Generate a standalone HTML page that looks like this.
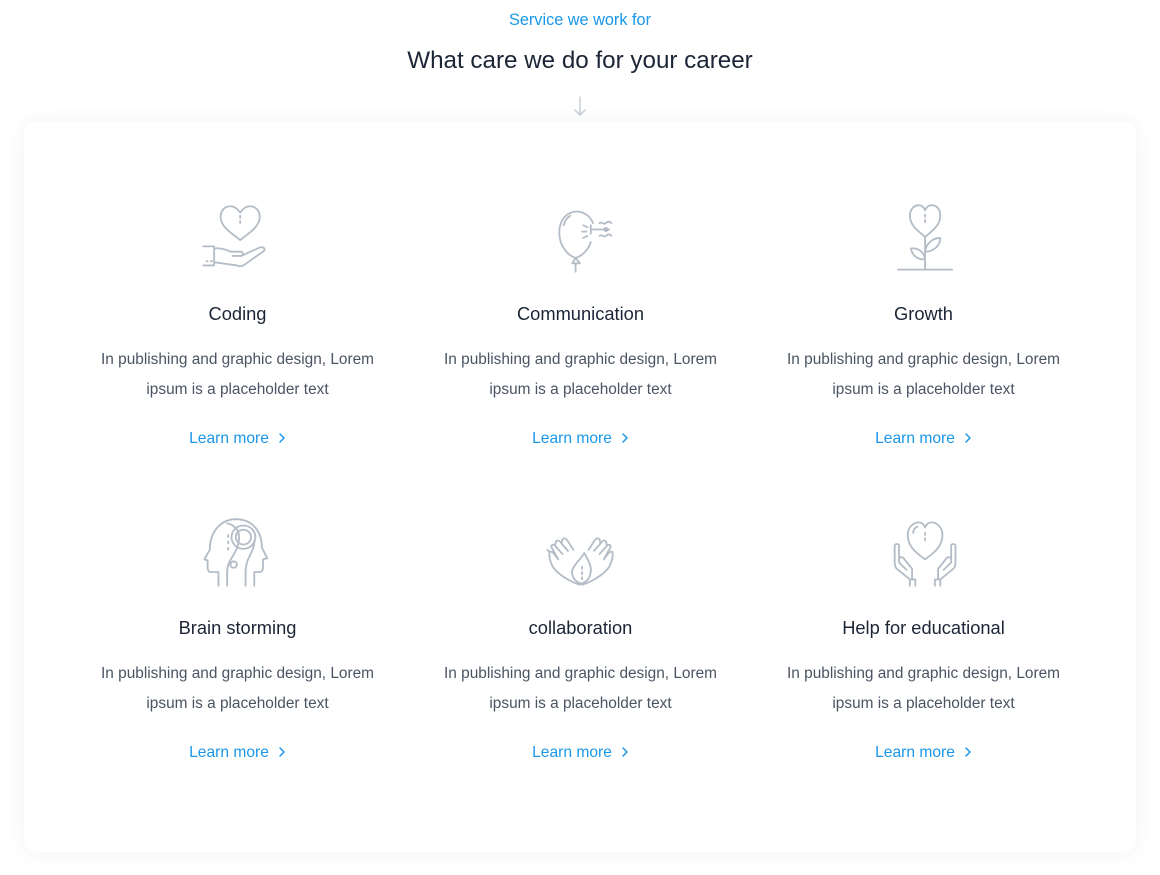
<!DOCTYPE html>
<html><head><meta charset="utf-8"><style>
*{margin:0;padding:0;box-sizing:border-box}
body{width:1160px;height:875px;background:#fff;font-family:"Liberation Sans",sans-serif;position:relative;overflow:hidden}
.sub{position:absolute;top:11px;left:0;width:1160px;text-align:center;color:#1a97e8;font-size:16.3px}
.h{position:absolute;top:47px;left:0;width:1160px;text-align:center;color:#1b2536;font-size:24.2px}
.arrow{position:absolute;left:573px;top:95px}
.card{position:absolute;left:24px;top:122px;width:1112px;height:730px;border-radius:12px;background:#fff;box-shadow:0 0 22px rgba(30,50,80,.06)}
.cell{position:absolute;width:343px;text-align:center}
.cell svg{display:block;margin:0 auto}
.t{font-size:18.3px;color:#1b2536;position:absolute;top:101px;width:100%}
.d{font-size:15.4px;color:#4a5462;line-height:30px;position:absolute;top:143px;width:100%}
.l{font-size:15.6px;color:#1a97e8;position:absolute;top:228px;width:100%}
.l svg{display:inline-block;margin-left:9px;vertical-align:-1px}
svg *{fill:none;stroke:#b4bdc7;stroke-width:1.7;stroke-linecap:round;stroke-linejoin:round}
</style></head><body>
<div class="sub">Service we work for</div>
<div class="h">What care we do for your career</div>
<svg class="arrow" width="14" height="22" viewBox="0 0 14 22"><path d="M7 2V20M2 15L7 20L12 15" style="stroke:#c8cfd6;stroke-width:1.5"/></svg>
<div class="card"></div>

<!-- row 1 -->
<div class="cell" style="left:66px;top:202px">
<svg width="76" height="74" viewBox="0 0 70 70" preserveAspectRatio="none"><path d="M37 36C30 30 19 24 19 14C19 8 23 4 28 4C32 4 35 7 37 10C39 7 42 4 46 4C51 4 55 8 55 14C55 24 44 30 37 36Z"/><path d="M37 13V15M37 18V20"/><path d="M3 42H13V60H3M13 44C19 43 24 45 28 47H38C40 47 40 51 38 51H30M30 51H38L55 43C59 42 61 45 58 47L40 60C38 61 36 61 34 60L13 57M6 56H7M10 56H11"/></svg>
<div class="t">Coding</div><div class="d">In publishing and graphic design, Lorem<br>ipsum is a placeholder text</div><div class="l">Learn more<svg width="8" height="12" viewBox="0 0 8 12"><path d="M2 2L6 6L2 10" style="stroke:#1a97e8;stroke-width:1.5"/></svg></div></div>

<div class="cell" style="left:409px;top:202px">
<svg width="76" height="74" viewBox="0 0 70 70" preserveAspectRatio="none"><path d="M30 53C22 50 15 41 15 29C15 17 22 9 31 9C38 9 44 14 46 20M30 53C36 51 42 45 44 38"/><path d="M19 22C20 18 22 15 25 13"/><path d="M30 53L27 58H34L30 53ZM30 58V66"/><path d="M37 22L41 24M36 28H40M37 34L41 32M44 26H61M52 20C54 18 56 22 58 20S61 18 63 20M52 32C54 30 56 34 58 32S61 30 63 32M44 22V30"/><circle cx="58" cy="26" r="1.5"/></svg>
<div class="t">Communication</div><div class="d">In publishing and graphic design, Lorem<br>ipsum is a placeholder text</div><div class="l">Learn more<svg width="8" height="12" viewBox="0 0 8 12"><path d="M2 2L6 6L2 10" style="stroke:#1a97e8;stroke-width:1.5"/></svg></div></div>

<div class="cell" style="left:752px;top:202px">
<svg width="76" height="74" viewBox="0 0 70 70" preserveAspectRatio="none"><path d="M36 33C29 27 22 22 22 13C22 7 26 3 30 3C33 3 35 5 36 8C37 5 39 3 42 3C47 3 50 7 50 13C50 22 43 27 36 33Z"/><path d="M36 12V14M36 17V19M36 33V64M11 64H61"/><path d="M36 54C30 55 24 51 23 44C29 43 35 47 36 54Z"/><path d="M36 47C37 39 43 34 50 34C50 41 44 47 36 47Z"/></svg>
<div class="t">Growth</div><div class="d">In publishing and graphic design, Lorem<br>ipsum is a placeholder text</div><div class="l">Learn more<svg width="8" height="12" viewBox="0 0 8 12"><path d="M2 2L6 6L2 10" style="stroke:#1a97e8;stroke-width:1.5"/></svg></div></div>

<!-- row 2 -->
<div class="cell" style="left:66px;top:516px">
<svg width="76" height="74" viewBox="0 0 70 70" preserveAspectRatio="none"><path d="M17 66V53H10C8 53 7 51 7 49V42L4 41L9 32C9 14 20 3 33 3"/><path d="M33 3C48 3 57 14 57 30L62 40L58 41V49C58 51 57 53 55 53H50V66"/><path d="M25 66V53C25 40 36 35 36 20C36 13 31 8 25 7"/><path d="M42 66V52C42 40 50 34 50 24"/><circle cx="40" cy="20" r="7"/><circle cx="40" cy="20" r="11"/><circle cx="31" cy="46" r="3"/><path d="M26 18V20M26 24V26M26 30V32"/></svg>
<div class="t">Brain storming</div><div class="d">In publishing and graphic design, Lorem<br>ipsum is a placeholder text</div><div class="l">Learn more<svg width="8" height="12" viewBox="0 0 8 12"><path d="M2 2L6 6L2 10" style="stroke:#1a97e8;stroke-width:1.5"/></svg></div></div>

<div class="cell" style="left:409px;top:516px">
<svg width="76" height="74" viewBox="0 0 70 70" preserveAspectRatio="none"><path d="M34 65C27 63 14 56 9 48C7 44 5 39 6 34C8 33 10 35 11 37L14 41M6 34L4 32M14 41L8 30C7 28 9 26 11 28L18 36M11 28L12 24C14 22 16 24 17 26L23 33M17 26L18 22C20 20 22 22 23 24L28 32"/><path d="M36 65C43 63 56 56 61 48C63 44 65 39 64 34C62 33 60 35 59 37L56 41M56 41L62 30C63 28 61 26 59 28L52 36M59 28L58 24C56 22 54 24 53 26L47 33M53 26L52 22C50 20 48 22 47 24L42 32"/><path d="M35 64C29 62 26 57 27 51C29 45 35 41 38 35C41 41 45 47 44 53C43 59 40 63 35 64Z"/><path d="M36 48V50M36 53V55M36 58V60"/></svg>
<div class="t">collaboration</div><div class="d">In publishing and graphic design, Lorem<br>ipsum is a placeholder text</div><div class="l">Learn more<svg width="8" height="12" viewBox="0 0 8 12"><path d="M2 2L6 6L2 10" style="stroke:#1a97e8;stroke-width:1.5"/></svg></div></div>

<div class="cell" style="left:752px;top:516px">
<svg width="76" height="74" viewBox="0 0 70 70" preserveAspectRatio="none"><path d="M36 41C28 35 20 29 20 18C20 11 25 6 30 6C33 6 35 8 36 11C37 8 39 6 42 6C47 6 52 11 52 18C52 29 44 35 36 41Z"/><path d="M25 16C25 13 27 11 29 10M36 16V18M36 21V23"/><path d="M22 66V60L10 50C8 48 8 45 8 43V28C8 26 12 26 12 28V44L19 51M12 40C14 38 16 39 17 41L24 50V60M22 60H27V66"/><path d="M50 66V60L62 50C64 48 64 45 64 43V28C64 26 60 26 60 28V44L53 51M60 40C58 38 56 39 55 41L48 50V60M50 60H45V66"/></svg>
<div class="t">Help for educational</div><div class="d">In publishing and graphic design, Lorem<br>ipsum is a placeholder text</div><div class="l">Learn more<svg width="8" height="12" viewBox="0 0 8 12"><path d="M2 2L6 6L2 10" style="stroke:#1a97e8;stroke-width:1.5"/></svg></div></div>
</body></html>
